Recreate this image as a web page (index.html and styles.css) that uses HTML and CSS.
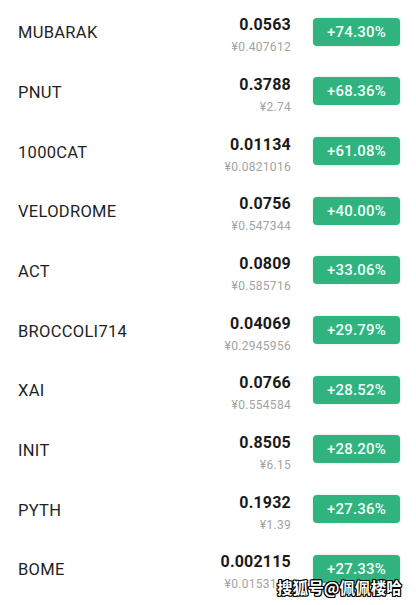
FILE: index.html
```html
<!DOCTYPE html>
<html lang="zh-CN">
<head>
<meta charset="utf-8">
<title>涨幅榜</title>
<link rel="stylesheet" href="styles.css">
</head>
<body>
<div class="list">
  <div class="row"><div class="name">MUBARAK</div><div class="price"><div class="last">0.0563</div><div class="cny">¥0.407612</div></div><div class="badge">+74.30%</div></div>
  <div class="row"><div class="name">PNUT</div><div class="price"><div class="last">0.3788</div><div class="cny">¥2.74</div></div><div class="badge">+68.36%</div></div>
  <div class="row"><div class="name">1000CAT</div><div class="price"><div class="last">0.01134</div><div class="cny">¥0.0821016</div></div><div class="badge">+61.08%</div></div>
  <div class="row"><div class="name">VELODROME</div><div class="price"><div class="last">0.0756</div><div class="cny">¥0.547344</div></div><div class="badge">+40.00%</div></div>
  <div class="row"><div class="name">ACT</div><div class="price"><div class="last">0.0809</div><div class="cny">¥0.585716</div></div><div class="badge">+33.06%</div></div>
  <div class="row"><div class="name">BROCCOLI714</div><div class="price"><div class="last">0.04069</div><div class="cny">¥0.2945956</div></div><div class="badge">+29.79%</div></div>
  <div class="row"><div class="name">XAI</div><div class="price"><div class="last">0.0766</div><div class="cny">¥0.554584</div></div><div class="badge">+28.52%</div></div>
  <div class="row"><div class="name">INIT</div><div class="price"><div class="last">0.8505</div><div class="cny">¥6.15</div></div><div class="badge">+28.20%</div></div>
  <div class="row"><div class="name">PYTH</div><div class="price"><div class="last">0.1932</div><div class="cny">¥1.39</div></div><div class="badge">+27.36%</div></div>
  <div class="row"><div class="name">BOME</div><div class="price"><div class="last">0.002115</div><div class="cny">¥0.0153126</div></div><div class="badge">+27.33%</div></div>
</div>
<div class="watermark">搜狐号@佩佩楼哈</div>
</body>
</html>
```
FILE: styles.css
```css
html, body {
  margin: 0;
  padding: 0;
  background: #ffffff;
  overflow: hidden;
}
body {
  width: 416px;
  height: 605px;
  position: relative;
  font-family: Roboto, "Noto Sans", "Liberation Sans", sans-serif;
}
.list {
  display: flex;
  flex-direction: column;
  padding-top: 2px;
}
.row {
  height: 59.67px;
  display: flex;
  align-items: center;
  padding: 0 16px 0 18px;
}
.name {
  flex: 1;
  font-size: 16.5px;
  color: #1f1f1f;
  letter-spacing: 0.3px;
  padding-top: 2px;
}
.price {
  display: flex;
  flex-direction: column;
  align-items: flex-end;
  padding-top: 7px;
  margin-right: 22px;
}
.last {
  font-size: 16px;
  font-weight: 700;
  color: #1a1a1a;
  line-height: 18px;
  letter-spacing: 0.2px;
}
.cny {
  font-size: 12px;
  color: #a3a3a3;
  line-height: 14px;
  margin-top: 6px;
  letter-spacing: 0.3px;
}
.badge {
  width: 87px;
  height: 28px;
  border-radius: 4px;
  background: #31b380;
  color: #effff7;
  font-size: 15px;
  font-weight: 500;
  display: flex;
  align-items: center;
  justify-content: center;
  box-shadow: 0 0 3px rgba(49, 179, 128, 0.25);
  letter-spacing: 0.2px;
}
.watermark {
  position: absolute;
  left: 277px;
  top: 577px;
  font-family: "Noto Sans CJK SC", sans-serif;
  font-size: 15.6px;
  font-weight: 700;
  color: #ffffff;
  line-height: 20px;
  white-space: nowrap;
  text-shadow: -1px -1px 0 #000, 1px -1px 0 #000, -1px 1px 0 #000, 1px 1px 0 #000, 0 1px 0 #000, 0 -1px 0 #000, 1px 0 0 #000, -1px 0 0 #000;
}
```
